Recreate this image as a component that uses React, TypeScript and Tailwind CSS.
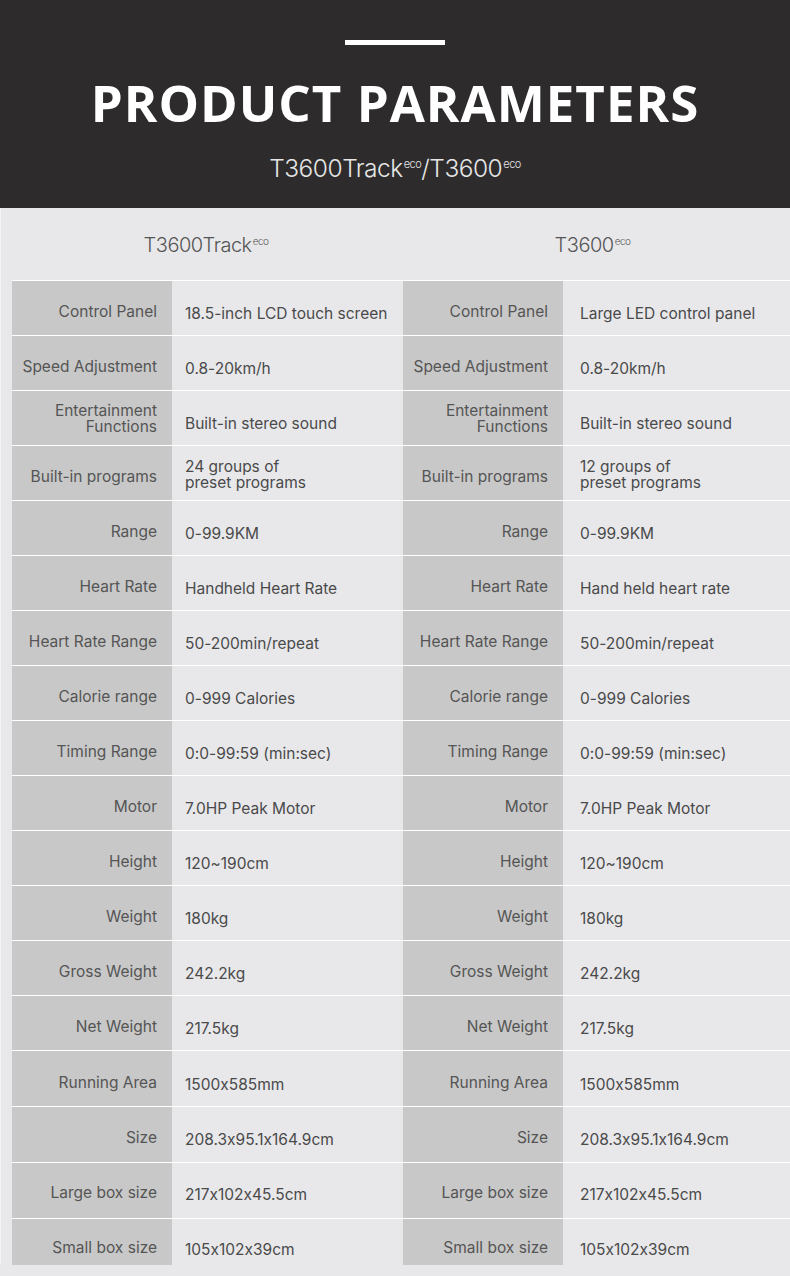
import React from 'react';

type Spec = { label: string; a: string; b: string };

const SPECS: Spec[] = [
  { label: 'Control Panel', a: '18.5-inch LCD touch screen', b: 'Large LED control panel' },
  { label: 'Speed Adjustment', a: '0.8-20km/h', b: '0.8-20km/h' },
  { label: 'Entertainment\nFunctions', a: 'Built-in stereo sound', b: 'Built-in stereo sound' },
  { label: 'Built-in programs', a: '24 groups of\npreset programs', b: '12 groups of\npreset programs' },
  { label: 'Range', a: '0-99.9KM', b: '0-99.9KM' },
  { label: 'Heart Rate', a: 'Handheld Heart Rate', b: 'Hand held heart rate' },
  { label: 'Heart Rate Range', a: '50-200min/repeat', b: '50-200min/repeat' },
  { label: 'Calorie range', a: '0-999 Calories', b: '0-999 Calories' },
  { label: 'Timing Range', a: '0:0-99:59 (min:sec)', b: '0:0-99:59 (min:sec)' },
  { label: 'Motor', a: '7.0HP Peak Motor', b: '7.0HP Peak Motor' },
  { label: 'Height', a: '120~190cm', b: '120~190cm' },
  { label: 'Weight', a: '180kg', b: '180kg' },
  { label: 'Gross Weight', a: '242.2kg', b: '242.2kg' },
  { label: 'Net Weight', a: '217.5kg', b: '217.5kg' },
  { label: 'Running Area', a: '1500x585mm', b: '1500x585mm' },
  { label: 'Size', a: '208.3x95.1x164.9cm', b: '208.3x95.1x164.9cm' },
  { label: 'Large box size', a: '217x102x45.5cm', b: '217x102x45.5cm' },
  { label: 'Small box size', a: '105x102x39cm', b: '105x102x39cm' },
];

// padding-top per row so text keeps a steady 55px pitch while the last rows grow a pixel
const LABEL_PT: Record<number, string> = { 15: 'pt-[7px]', 16: 'pt-[5px]', 17: 'pt-[4px]' };
const VALUE_PT: Record<number, string> = { 15: 'pt-[11px]', 16: 'pt-[9px]', 17: 'pt-[8px]' };

const LabelCell = ({ text, pt }: { text: string; pt?: string }) => {
  const multi = text.includes('\n');
  return (
    <div className={`bg-[#c8c8c8] flex items-center justify-end pr-[15px] ${multi ? 'pt-[1px]' : pt ?? 'pt-[8px]'}`}>
      <p className="whitespace-pre-line text-right text-[15.5px] leading-[16px] text-[#555]">{text}</p>
    </div>
  );
};

const ValueCell = ({ text, pad, pt }: { text: string; pad: string; pt?: string }) => {
  const multi = text.includes('\n');
  return (
    <div className={`flex items-center ${pad} ${multi ? 'pt-[3px]' : pt ?? 'pt-[12px]'}`}>
      <p className="whitespace-pre-line text-[15.5px] leading-[16px] text-[#4a4a4a]">{text}</p>
    </div>
  );
};

const Row = ({ s, i }: { s: Spec; i: number }) => (
  <>
    <LabelCell text={s.label} pt={LABEL_PT[i]} />
    <ValueCell text={s.a} pad="pl-[13px]" pt={VALUE_PT[i]} />
    <LabelCell text={s.label} pt={LABEL_PT[i]} />
    <ValueCell text={s.b} pad="pl-[17px]" pt={VALUE_PT[i]} />
  </>
);

export default function App() {
  const last = SPECS.length - 1;
  return (
    <div
      className="w-[790px] h-[1276px] overflow-hidden bg-[#e8e8ea] [font-feature-settings:'calt'_0]"
      style={{ fontFamily: 'Inter, "Noto Sans", sans-serif' }}
    >
      <header className="h-[208px] bg-[#2d2b2c] flex flex-col items-center">
        <div className="mt-[40px] w-[100px] h-[5px] bg-white" />
        <h1 className="mt-[27px] text-white text-[51px] font-bold leading-[60px] tracking-[1px]" style={{ fontFamily: '"Open Sans", sans-serif' }}>
          PRODUCT PARAMETERS
        </h1>
        <p className="mt-[20px] text-[#e6e6e6] text-[24.5px] font-light leading-[32px] tracking-[-0.5px]">
          T3600Track<sup className="text-[11px] -top-[9px] ml-[1px]">eco</sup>/T3600<sup className="text-[11px] -top-[9px] ml-[1px]">eco</sup>
        </p>
      </header>

      <div className="border-l border-[#f4f4f5]">
        <div className="h-[72px] grid grid-cols-[402px_387px] items-center text-[20px] font-light text-[#555] tracking-[-0.5px]">
          <div className="text-center pl-[8px] pt-[2px]">T3600Track<sup className="text-[10px] -top-[7px] ml-[1px]">eco</sup></div>
          <div className="text-center pr-[8px] pt-[2px]">T3600<sup className="text-[10px] -top-[7px] ml-[1px]">eco</sup></div>
        </div>

        <div className="ml-[11px]">
          {SPECS.map((s, i) =>
            i === last ? (
              <div key={s.label} className="border-t border-white h-[47px] overflow-hidden">
                <div className="h-[54px] grid grid-cols-[160px_231px_160px_227px]">
                  <Row s={s} i={i} />
                </div>
              </div>
            ) : (
              <div
                key={s.label}
                className={`border-t border-white grid grid-cols-[160px_231px_160px_227px] ${i >= 14 ? 'h-[56px]' : 'h-[55px]'}`}
              >
                <Row s={s} i={i} />
              </div>
            )
          )}
        </div>
      </div>
    </div>
  );
}
